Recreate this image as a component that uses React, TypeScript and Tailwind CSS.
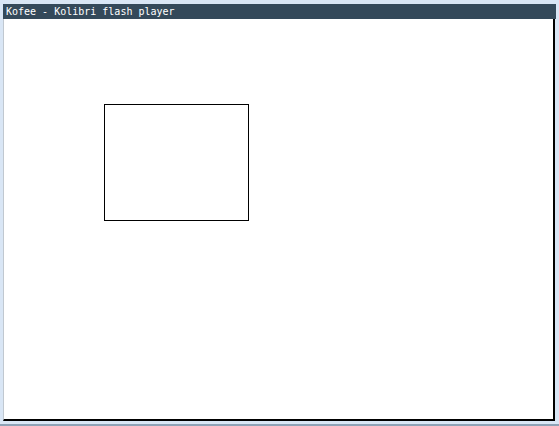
import React from "react";

export default function App() {
  return (
    <div className="w-[559px] h-[426px] bg-[#d9e6f5] flex flex-col border-b-2 border-[#8ea2b6]">
      <div className="mt-[4px] mx-[3px] flex flex-col flex-1">
        <div
          className="h-[15px] bg-[#34495a] text-white text-[10px] leading-[15px] pl-[3px] whitespace-pre"
          style={{ fontFamily: '"DejaVu Sans Mono", monospace' }}
        >
          Kofee - Kolibri flash player
        </div>
        <div className="flex-1 bg-white border-l border-[#c0c8d0] border-r-2 border-b-2 border-r-black border-b-black mb-[3px] mr-[1px]">
          <div className="ml-[100px] mt-[85px] w-[145px] h-[117px] border border-black" />
        </div>
      </div>
    </div>
  );
}
